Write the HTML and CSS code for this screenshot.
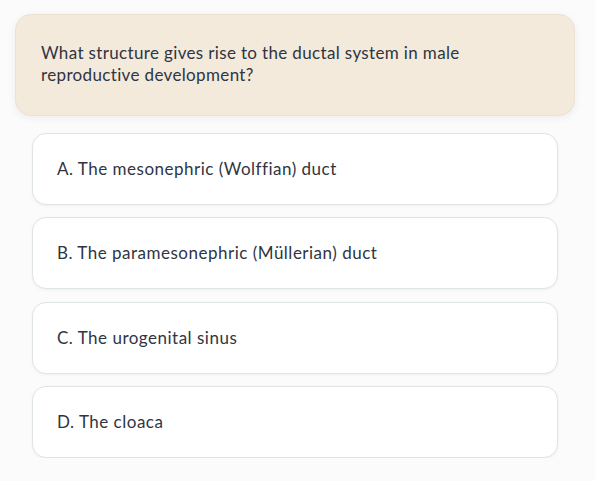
FILE: index.html
```html
<!DOCTYPE html>
<html lang="en">
<head>
<meta charset="utf-8">
<title>Quiz</title>
<link rel="stylesheet" href="styles.css">
</head>
<body>
<main class="quiz">
  <section class="question">
    <p class="question-text">What structure gives rise to the ductal system in male reproductive development?</p>
  </section>
  <ul class="options">
    <li class="option">A. The mesonephric (Wolffian) duct</li>
    <li class="option">B. The paramesonephric (Müllerian) duct</li>
    <li class="option">C. The urogenital sinus</li>
    <li class="option">D. The cloaca</li>
  </ul>
</main>
</body>
</html>
```
FILE: styles.css
```css
* { box-sizing: border-box; }
html, body {
  margin: 0;
  padding: 0;
  background: #fafbfa;
}
body {
  font-family: Lato, "Noto Sans", sans-serif;
  color: #2f3542;
  font-size: 17px;
  letter-spacing: 0.35px;
}
.quiz {
  padding: 14px 20px 0 15px;
}
.question {
  background: #f3eadb;
  border: 1px solid #ebe2d1;
  border-radius: 16px;
  padding: 27px 25px 29px;
  box-shadow: 0 2px 8px rgba(0, 0, 0, 0.06);
}
.question-text {
  margin: 0;
  line-height: 22px;
  max-width: 450px;
}
.options {
  list-style: none;
  margin: 17px 17px 0 17px;
  padding: 0;
  display: flex;
  flex-direction: column;
  gap: 12.3px;
}
.option {
  background: #ffffff;
  border: 1px solid #dfe5e3;
  border-radius: 14px;
  padding: 23px 24px;
  line-height: 24px;
  letter-spacing: 0.5px;
  box-shadow: 0 1px 3px rgba(0, 0, 0, 0.05);
}
```
